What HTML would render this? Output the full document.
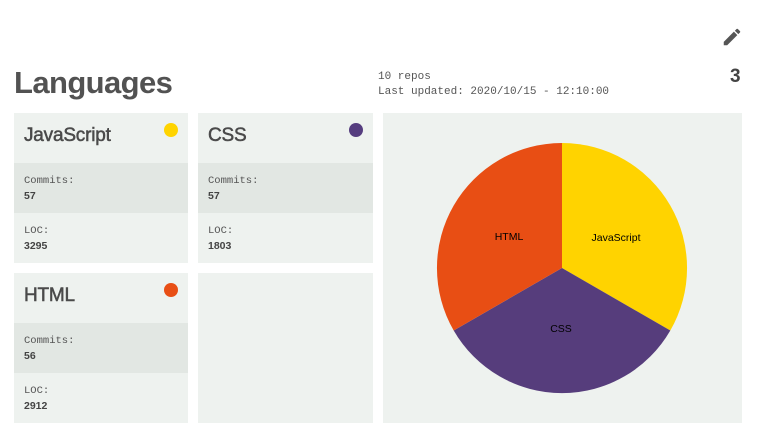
<!DOCTYPE html>
<html><head><style>
body{margin:0;width:768px;height:448px;background:#fff;position:relative;font-family:"Liberation Sans",sans-serif;color:#4a4a4a;overflow:hidden}
.abs{position:absolute}
h1{position:absolute;left:14px;top:65px;margin:0;font-size:31px;font-weight:bold;color:#525252;letter-spacing:-0.6px}
.meta{left:378px;top:70px;font-family:"Liberation Mono",monospace;font-size:11px;line-height:15px;color:#555}
.card{position:absolute;width:174px;height:150px;background:#eef2ef}
.card .t{position:absolute;left:10px;top:12px;font-size:19px;font-weight:normal;-webkit-text-stroke:0.5px #4a4a4a;letter-spacing:-0.2px;color:#4a4a4a}
.card .dot{position:absolute;right:10px;top:10px;width:14px;height:14px;border-radius:50%}
.sec{position:absolute;left:0;width:174px;height:50px}
.sec .l{position:absolute;left:10px;top:12px;font-family:"Liberation Mono",monospace;font-size:10.5px;color:#555}
.sec .v{position:absolute;left:10px;top:27px;font-size:10.5px;font-weight:bold;color:#444}
</style></head><body>
<svg class="abs" style="left:721px;top:26px" width="22" height="22" viewBox="0 0 24 24"><path fill="#555" d="M3 17.25V21h3.75L17.81 9.94l-3.75-3.75L3 17.25zM20.71 7.04a1 1 0 0 0 0-1.41l-2.34-2.34a1 1 0 0 0-1.41 0l-1.83 1.83 3.75 3.75 1.83-1.83z"/></svg>
<h1>Languages</h1>
<div class="abs meta">10 repos<br>Last updated: 2020/10/15 - 12:10:00</div>
<div class="abs" style="left:730px;top:66px;font-size:19px;font-weight:bold;color:#444">3</div>

<div class="card" style="left:14px;top:113px"><div class="t">JavaScript</div><div class="dot" style="background:#ffd400"></div>
<div class="sec" style="top:50px;background:#e2e7e3"><div class="l">Commits:</div><div class="v">57</div></div>
<div class="sec" style="top:100px"><div class="l">LOC:</div><div class="v">3295</div></div></div>

<div class="card" style="left:198px;top:113px;width:175px"><div class="t">CSS</div><div class="dot" style="background:#553d7f"></div>
<div class="sec" style="top:50px;background:#e2e7e3;width:175px"><div class="l">Commits:</div><div class="v">57</div></div>
<div class="sec" style="top:100px"><div class="l">LOC:</div><div class="v">1803</div></div></div>

<div class="card" style="left:14px;top:273px"><div class="t">HTML</div><div class="dot" style="background:#e84f15"></div>
<div class="sec" style="top:50px;background:#e2e7e3"><div class="l">Commits:</div><div class="v">56</div></div>
<div class="sec" style="top:100px"><div class="l">LOC:</div><div class="v">2912</div></div></div>

<div class="card" style="left:198px;top:273px;width:175px"></div>

<div class="abs" style="left:383px;top:113px;width:359px;height:310px;background:#eef2ef"></div>
<svg class="abs" style="left:0;top:0" width="768" height="448">
<path d="M562 268 L562 143 A125 125 0 0 1 670.3 330.5 Z" fill="#ffd300"/>
<path d="M562 268 L670.3 330.5 A125 125 0 0 1 453.7 330.5 Z" fill="#563d7c"/>
<path d="M562 268 L453.7 330.5 A125 125 0 0 1 562 143 Z" fill="#e84e14"/>
<g font-family="Liberation Sans,sans-serif" font-size="10.5" fill="#000" text-anchor="middle">
<text x="509" y="240">HTML</text><text x="616" y="241">JavaScript</text><text x="561" y="332">CSS</text></g>
</svg>
</body></html>
